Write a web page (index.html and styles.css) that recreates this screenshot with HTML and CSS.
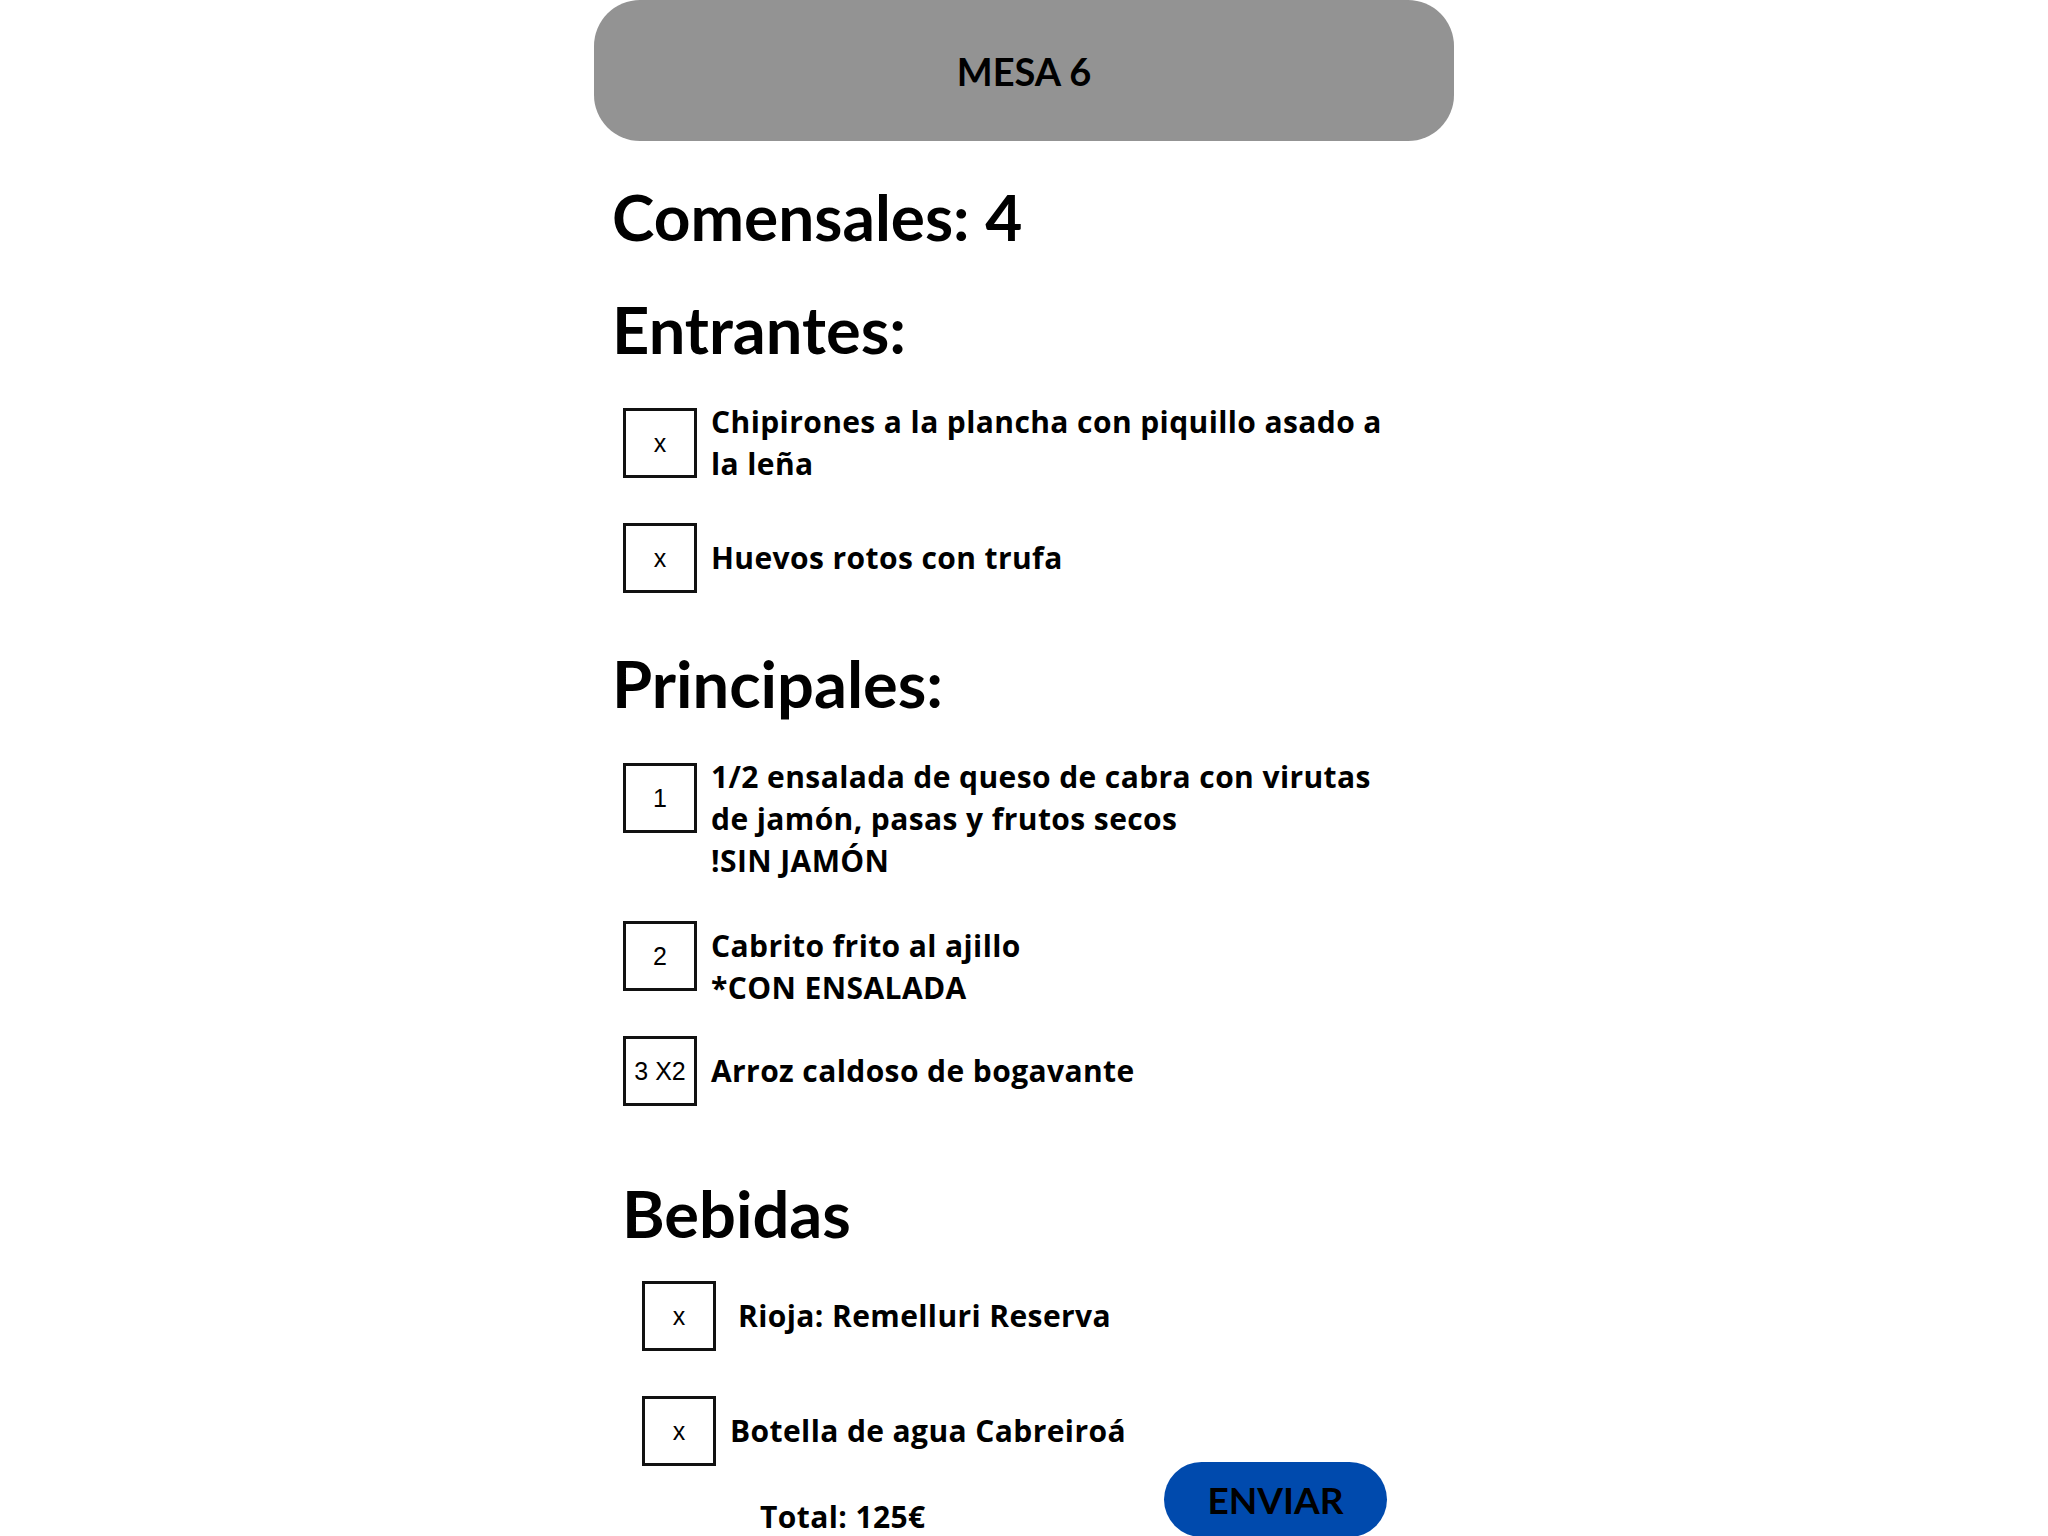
FILE: index.html
```html
<!doctype html>
<html lang="es">

<head>

<meta charset="utf-8">
<title>Mesa 6</title>

<link rel="stylesheet" href="styles.css">

</head>
<body>

<div class="ticket">

  <!-- cabecera de la mesa -->
  <div class="mesa">
    <p>MESA 6</p>
  </div>

  <div class="pedido">

    <h2 class="comensales">Comensales: 4</h2>

    <!-- Entrantes -->
    <h2 class="seccion entrantes">Entrantes:</h2>
    <div class="lista">
      <div class="plato plato-chipirones">
        <div class="caja">x</div>
        <p class="nombre">Chipirones a la plancha con piquillo asado a<br>la leña</p>
      </div>
      <div class="plato plato-huevos">
        <div class="caja">x</div>
        <p class="nombre">Huevos rotos con trufa</p>
      </div>
    </div>

    <!-- Principales -->
    <h2 class="seccion principales">Principales:</h2>
    <div class="lista">
      <div class="plato plato-ensalada arriba">
        <div class="caja">1</div>
        <p class="nombre">1/2 ensalada de queso de cabra con virutas<br>de jamón, pasas y frutos secos<br>!SIN JAMÓN</p>
      </div>
      <div class="plato plato-cabrito arriba">
        <div class="caja">2</div>
        <p class="nombre">Cabrito frito al ajillo<br>*CON ENSALADA</p>
      </div>
      <div class="plato plato-arroz">
        <div class="caja">3 X2</div>
        <p class="nombre">Arroz caldoso de bogavante</p>
      </div>
    </div>

    <!-- Bebidas -->
    <h2 class="seccion bebidas">Bebidas</h2>
    <div class="lista lista-bebidas">
      <div class="plato plato-rioja">
        <div class="caja">x</div>
        <p class="nombre">Rioja: Remelluri Reserva</p>
      </div>
      <div class="plato plato-agua">
        <div class="caja">x</div>
        <p class="nombre">Botella de agua Cabreiroá</p>
      </div>
    </div>

    <div class="pie">
      <p class="total">Total: 125€</p>
      <div class="enviar">ENVIAR</div>
    </div>

  </div>
</div>

</body>

</html>
```

FILE: styles.css
```css
body {
  margin: 0;
  font-family: "Lato", "Liberation Sans", sans-serif;
  color: #000000;
  background-color: #ffffff;
}
.ticket {
  width: 860px;
  margin: 0 auto;
}

/* cabecera gris */
.mesa {
  height: 141px;
  display: flex;
  align-items: center;
  justify-content: center;
  border-radius: 46px;
  background-color: #939393;
}
.mesa p {
  margin: 0;
  font-size: 38px;
  font-weight: 700;
}

.pedido {
  padding: 0 18px;
}
.pedido h2 {
  margin: 0;
  font-size: 65px;
  font-weight: 700;
  line-height: 74px;
}
.comensales {
  margin-top: 39px !important;
  font-size: 64px !important;
}
.entrantes {
  margin-top: 38px !important;
}
.principales {
  margin-top: 53px !important;
}
.bebidas {
  margin-top: 70px !important;
  padding-left: 10px;
}

/* filas de platos */
.lista {
  display: flex;
  flex-direction: column;
  padding-left: 11px;
}
.plato {
  display: flex;
  align-items: center;
}
.plato.arriba {
  align-items: flex-start;
}
.caja {
  flex: none;
  box-sizing: border-box;
  width: 74px;
  height: 70px;
  display: flex;
  align-items: center;
  justify-content: center;
  border: 3px solid #111111;
  font-family: "Liberation Sans", sans-serif;
  font-size: 25px;
  font-weight: 400;
}
.nombre {
  margin: 0 0 0 14px;
  font-family: "Open Sans", "Liberation Sans", sans-serif;
  font-size: 30px;
  font-weight: 700;
  line-height: 42px;
  letter-spacing: 0.4px;
}

.plato-chipirones { margin-top: 35px; }
.plato-huevos { margin-top: 38px; }
.plato-ensalada { margin-top: 36px; }
.plato-ensalada .caja { margin-top: 7px; }
.plato-cabrito { margin-top: 39px; }
.plato-cabrito .nombre { margin-top: 4px; }
.plato-arroz { margin-top: 27px; }

.lista-bebidas {
  padding-left: 30px;
}
.plato-rioja { margin-top: 31px; }
.plato-rioja .nombre { margin-left: 22px; }
.plato-agua { margin-top: 45px; }

/* total y boton */
.pie {
  display: flex;
  align-items: flex-end;
  margin-top: -4px;
}
.total {
  margin: 0 0 0 148px;
  font-family: "Open Sans", "Liberation Sans", sans-serif;
  font-size: 30px;
  font-weight: 700;
  line-height: 40px;
  letter-spacing: 0.4px;
}
.enviar {
  margin-left: auto;
  margin-right: 49px;
  width: 223px;
  height: 75px;
  display: flex;
  align-items: center;
  justify-content: center;
  border-radius: 38px;
  background-color: #004aad;
  font-size: 37px;
  font-weight: 700;
}
```
